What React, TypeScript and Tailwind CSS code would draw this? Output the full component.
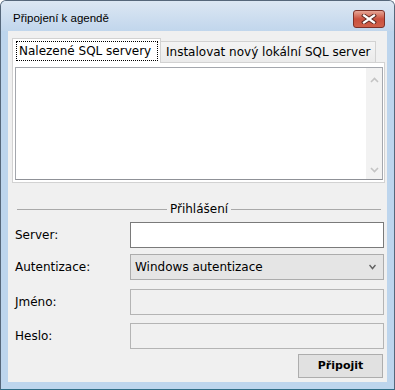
import React from 'react';

const UI_FONT = "font-['DejaVu_Sans',Tahoma,sans-serif]";

function Chevron({ dir, className }: { dir: 'up' | 'down'; className?: string }) {
    return (
        <svg width="9" height="6" viewBox="0 0 9 6" className={className}>
            <path
                d={dir === 'up' ? 'M1 5 L4.5 1.5 L8 5' : 'M1 1 L4.5 4.5 L8 1'}
                fill="none"
                stroke="currentColor"
                strokeWidth="1.6"
            />
        </svg>
    );
}

function Row({
    label,
    className,
    children,
}: {
    label: string;
    className?: string;
    children: React.ReactNode;
}) {
    return (
        <div className={`flex items-center h-[26px] ${className ?? ''}`}>
            <span className="w-[115px] text-[12px] text-black">{label}</span>
            <div className="flex-1 h-full">{children}</div>
        </div>
    );
}

export default function App() {
    return (
        <div className={`w-[395px] h-[390px] bg-white ${UI_FONT}`}>
            <div className="w-[395px] h-[390px] flex flex-col rounded-t-[6px] border border-[#56677a] border-b-[#2f6d86] bg-[#bdd5ed]">
                {/* title bar */}
                <div className="h-[30px] flex items-start pl-[12px] pr-[9px] rounded-t-[5px] bg-gradient-to-b from-[#dce7f3] to-[#c1d6ec]">
                    <span className="mt-[10px] text-[11.5px] leading-[14px] text-black font-['Liberation_Sans',Arial,sans-serif]">
                        Připojení k agendě
                    </span>
                    <div className="ml-auto mt-[9px] w-[32px] h-[18px] rounded-[3px] border border-[#7d3027] bg-gradient-to-b from-[#e6a596] via-[#c9503e] to-[#d0614b] flex items-center justify-center">
                        <svg width="16" height="10" viewBox="0 0 16 10">
                            <path d="M3 1.5 L13 8.5 M13 1.5 L3 8.5" stroke="#5a2620" strokeWidth="4" strokeLinecap="square" />
                            <path d="M3 1.5 L13 8.5 M13 1.5 L3 8.5" stroke="#ffffff" strokeWidth="2.2" strokeLinecap="square" />
                        </svg>
                    </div>
                </div>

                {/* client area */}
                <div className="mx-[7px] h-[351px] bg-[#f0f0f0] flex flex-col pt-[7px]">
                    {/* tabs */}
                    <div className="flex items-end h-[25px] -mb-px pl-[4px] relative z-10">
                        <div className="w-[149px] h-[25px] flex bg-white border-l border-t border-r border-[#d2d2d2] pl-[3px] pr-[2px] pt-[2px] pb-[2px]">
                            <div className="flex-1 flex items-center border border-dotted border-black pl-[2px] text-[12px] text-black">
                                Nalezené SQL servery
                            </div>
                        </div>
                        <div className="w-[215px] h-[21px] mb-px flex items-center pl-[5px] bg-gradient-to-b from-[#f4f4f4] to-[#ebebeb] border-t border-r border-[#d2d2d2] text-[12px] text-black">
                            Instalovat nový lokální SQL server
                        </div>
                    </div>

                    {/* tab panel */}
                    <div className="ml-[4px] w-[373px] h-[121px] bg-white border border-[#d2d2d2] pl-[2px] pr-[1px] pt-[4px] pb-[2px]">
                        <div className="h-full flex bg-white border border-[#a4a7ad] border-b-[#8f9197]">
                            <div className="flex-1" />
                            <div className="w-[16px] bg-[#f2f2f2] flex flex-col items-center justify-between pt-[9px] pb-[6px] text-[#c4c4c4]">
                                <Chevron dir="up" />
                                <Chevron dir="down" />
                            </div>
                        </div>
                    </div>

                    {/* group header */}
                    <div className="mt-[20px] h-[13px] flex items-center pl-[9px] pr-[6px]">
                        <div className="flex-1 h-px bg-[#a9a9a9]" />
                        <span className="px-[3px] text-[12px] leading-[13px] text-black">Přihlášení</span>
                        <div className="flex-1 h-px bg-[#a9a9a9]" />
                    </div>

                    {/* form */}
                    <div className="flex flex-col pl-[7px] pr-[3px]">
                        <Row label="Server:" className="mt-[6px]">
                            <div className="h-full bg-white border border-[#7a7a7a]" />
                        </Row>
                        <Row label="Autentizace:" className="mt-[6px]">
                            <div className="h-full flex items-center bg-[#e5e5e5] border border-[#acacac] pl-[4px] pr-[6px] text-[12px] text-black">
                                <span className="flex-1">Windows autentizace</span>
                                <Chevron dir="down" className="text-[#606060] scale-x-[0.85]" />
                            </div>
                        </Row>
                        <Row label="Jméno:" className="mt-[9px]">
                            <div className="h-full bg-[#f0f0f0] border border-[#b4b4b4]" />
                        </Row>
                        <Row label="Heslo:" className="mt-[8px]">
                            <div className="h-full bg-[#f0f0f0] border border-[#b4b4b4]" />
                        </Row>
                        <div className="mt-[5px] flex justify-end pr-[1px]">
                            <div className="w-[85px] h-[24px] flex items-center justify-center bg-[#e1e1e1] border border-[#adadad] text-[11px] font-bold text-black">
                                Připojit
                            </div>
                        </div>
                    </div>
                </div>
            </div>
        </div>
    );
}
